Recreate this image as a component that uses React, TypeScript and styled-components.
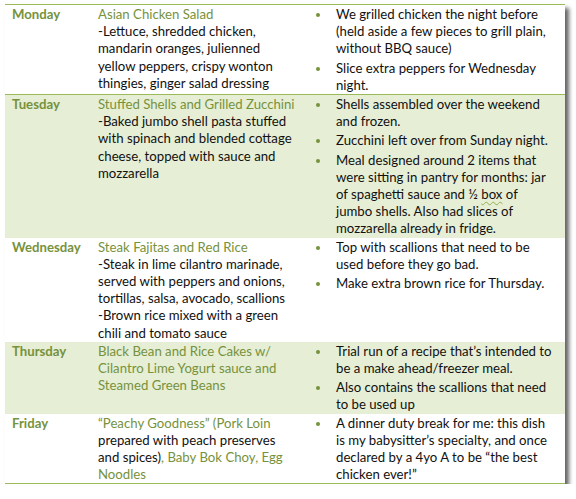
import styled, { createGlobalStyle } from "styled-components";

const GlobalStyle = createGlobalStyle`
* {
box-sizing: border-box;
}
body {
margin: 0;
background: #fff;
}
`;

const Page = styled.div`
padding: 4px 0 0 5px;
font-family: Lato, "Open Sans", sans-serif;
font-size: 13.2px;
line-height: 17.2px;
color: #111;
`;

const Table = styled.table`
width: 560px;
table-layout: fixed;
border-collapse: collapse;
border-top: 1px solid #9bbb59;
border-bottom: 1px solid #9bbb59;
box-shadow: 4px 4px 4px rgba(0, 0, 0, 0.6);
background: #fff;
`;

const Row = styled.tr<{ $shaded?: boolean; $ruled?: boolean }>`
background: ${(p) => (p.$shaded ? "#e6eed5" : "#fff")};
border-bottom: ${(p) => (p.$ruled ? "1px solid #9bbb59" : "none")};
`;

const Day = styled.td<{ $tail?: boolean }>`
width: 88px;
vertical-align: top;
padding: 1px 0 ${(p) => (p.$tail ? "3px" : "0")} 7px;
font-weight: bold;
color: #76923c;
`;

const Meal = styled.td`
width: 212px;
vertical-align: top;
padding: 1px 5px 0;
white-space: nowrap;
`;

const Notes = styled.td`
vertical-align: top;
padding: 1px 0 0;
white-space: nowrap;
`;

const List = styled.ul`
list-style: none;
margin: 0;
padding: 0 0 0 31px;
`;

const Item = styled.li`
position: relative;
margin-bottom: 2px;
&:last-child {
margin-bottom: 0;
}
&::before {
content: "";
position: absolute;
left: -20px;
top: 7px;
width: 4px;
height: 4px;
border-radius: 50%;
background: #76923c;
}
`;

const Accent = styled.span`
color: #76923c;
`;

const Squiggle = styled.span`
text-decoration: underline wavy #8fb04a;
text-decoration-thickness: 1px;
text-underline-offset: 2px;
`;

export default function App() {
    return <Page>
        <GlobalStyle />
        <Table>
            <tbody>
                <Row $ruled>
                    <Day>Monday</Day>
                    <Meal>
                        <Accent>Asian Chicken Salad</Accent><br />
                        -Lettuce, shredded chicken,<br />
                        mandarin oranges, julienned<br />
                        yellow peppers, crispy wonton<br />
                        thingies, ginger salad dressing
                    </Meal>
                    <Notes>
                        <List>
                            <Item>We grilled chicken the night before<br />(held aside a few pieces to grill plain,<br />without BBQ sauce)</Item>
                            <Item>Slice extra peppers for Wednesday<br />night.</Item>
                        </List>
                    </Notes>
                </Row>
                <Row $shaded>
                    <Day>Tuesday</Day>
                    <Meal>
                        <Accent>Stuffed Shells and Grilled Zucchini</Accent><br />
                        -Baked jumbo shell pasta stuffed<br />
                        with spinach and blended cottage<br />
                        cheese, topped with sauce and<br />
                        mozzarella
                    </Meal>
                    <Notes>
                        <List>
                            <Item>Shells assembled over the weekend<br />and frozen.</Item>
                            <Item>Zucchini left over from Sunday night.</Item>
                            <Item>Meal designed around 2 items that<br />were sitting in pantry for months: jar<br />of spaghetti sauce and ½ <Squiggle>box</Squiggle> of<br />jumbo shells. Also had slices of<br />mozzarella already in fridge.</Item>
                        </List>
                    </Notes>
                </Row>
                <Row>
                    <Day>Wednesday</Day>
                    <Meal>
                        <Accent>Steak Fajitas and Red Rice</Accent><br />
                        -Steak in lime cilantro marinade,<br />
                        served with peppers and onions,<br />
                        tortillas, salsa, avocado, scallions<br />
                        -Brown rice mixed with a green<br />
                        chili and tomato sauce
                    </Meal>
                    <Notes>
                        <List>
                            <Item>Top with scallions that need to be<br />used before they go bad.</Item>
                            <Item>Make extra brown rice for Thursday.</Item>
                        </List>
                    </Notes>
                </Row>
                <Row $shaded>
                    <Day>Thursday</Day>
                    <Meal>
                        <Accent>Black Bean and Rice Cakes w/<br />Cilantro Lime Yogurt sauce and<br />Steamed Green Beans</Accent>
                    </Meal>
                    <Notes>
                        <List>
                            <Item>Trial run of a recipe that’s intended to<br />be a make ahead/freezer meal.</Item>
                            <Item>Also contains the scallions that need<br />to be used up</Item>
                        </List>
                    </Notes>
                </Row>
                <Row>
                    <Day $tail>Friday</Day>
                    <Meal>
                        <Accent>“Peachy Goodness” (Pork Loin</Accent><br />
                        prepared with peach preserves<br />
                        and spices)<Accent>, Baby Bok Choy, Egg</Accent><br />
                        <Accent>Noodles</Accent>
                    </Meal>
                    <Notes>
                        <List>
                            <Item>A dinner duty break for me: this dish<br />is my babysitter’s specialty, and once<br />declared by a 4yo A to be “the best<br />chicken ever!”</Item>
                        </List>
                    </Notes>
                </Row>
            </tbody>
        </Table>
    </Page>
}
